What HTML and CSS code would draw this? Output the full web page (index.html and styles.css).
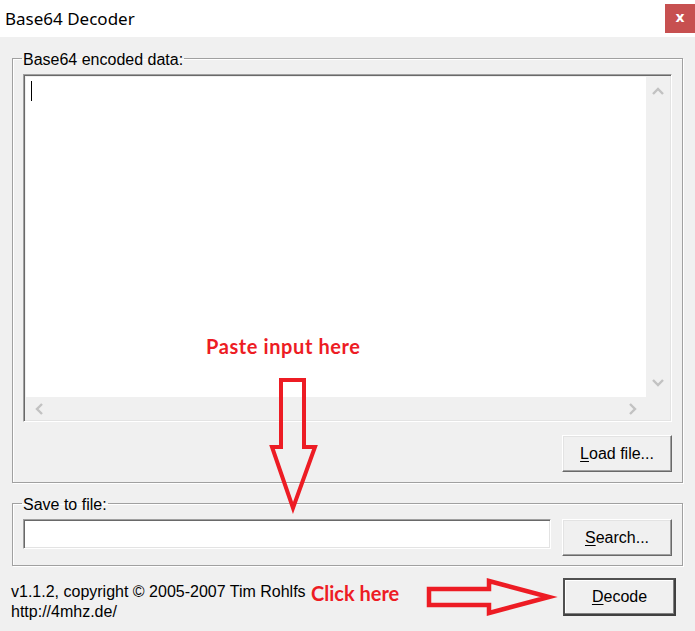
FILE: index.html
```html
<!DOCTYPE html>
<html>
<head>
<meta charset="utf-8">
<link rel="stylesheet" href="styles.css">
</head>
<body>
<div class="window">
  <div class="titlebar">
    <span class="title">Base64 Decoder</span>
    <div class="close">x</div>
  </div>
  <div class="content">
    <fieldset class="group group-data">
      <legend>Base64 encoded data:</legend>
      <div class="textbox">
        <div class="text-area"><span class="caret"></span></div>
        <div class="vscroll">
          <svg class="chev" width="14" height="10" viewBox="0 0 14 10"><path d="M2 8 L7 3 L12 8" fill="none" stroke="#c2c2c2" stroke-width="2.4"/></svg>
          <svg class="chev" width="14" height="10" viewBox="0 0 14 10"><path d="M2 2 L7 7 L12 2" fill="none" stroke="#c2c2c2" stroke-width="2.4"/></svg>
        </div>
        <div class="hscroll">
          <svg class="chev" width="10" height="14" viewBox="0 0 10 14"><path d="M8 2 L3 7 L8 12" fill="none" stroke="#c2c2c2" stroke-width="2.4"/></svg>
          <svg class="chev" width="10" height="14" viewBox="0 0 10 14"><path d="M2 2 L7 7 L2 12" fill="none" stroke="#c2c2c2" stroke-width="2.4"/></svg>
        </div>
        <div class="corner"></div>
      </div>
      <div class="row-end">
        <button class="btn"><u>L</u>oad file...</button>
      </div>
    </fieldset>
    <fieldset class="group group-save">
      <legend>Save to file:</legend>
      <div class="save-row">
        <div class="input"></div>
        <button class="btn"><u>S</u>earch...</button>
      </div>
    </fieldset>
    <div class="footer">
      <div class="info">
        <div>v1.1.2, copyright © 2005-2007 Tim Rohlfs</div>
        <div>http://4mhz.de/</div>
      </div>
      <button class="btn btn-default"><u>D</u>ecode</button>
    </div>
  </div>

  <div class="note note-paste">Paste input here</div>
  <div class="note note-click">Click here</div>
  <svg class="arrows" width="695" height="631" viewBox="0 0 695 631">
    <polygon points="281,380 304,380 304,447 315,447 293,508 272,447 281,447" fill="none" stroke="#ed1c24" stroke-width="4" stroke-linejoin="miter"/>
    <polygon points="429,589 489,589 489,581 549,597 489,613 489,605 429,605" fill="none" stroke="#ed1c24" stroke-width="4.5" stroke-linejoin="miter"/>
  </svg>
</div>
</body>
</html>
```

FILE: styles.css
```css
html, body {
  margin: 0;
  padding: 0;
}
body {
  background: #f0f0f0;
  font-family: "Liberation Sans", Arial, sans-serif;
  font-size: 16px;
  color: #000;
}
.window {
  position: relative;
  width: 695px;
  height: 631px;
  overflow: hidden;
  background: #f0f0f0;
}
.titlebar {
  height: 37px;
  background: #fff;
  display: flex;
  align-items: flex-start;
}
.title {
  font-family: "Noto Sans", sans-serif;
  font-size: 17px;
  line-height: 20px;
  padding: 9px 0 0 5px;
  color: #000;
}
.close {
  margin-left: auto;
  margin-top: 4px;
  width: 30px;
  height: 29px;
  background: #c75050;
  color: #fff;
  font-family: "DejaVu Sans", sans-serif;
  font-weight: bold;
  font-size: 14px;
  line-height: 27px;
  text-align: center;
}
.content {
  padding: 0 12px;
}
.group {
  margin: 0;
  border: 1px solid #a0a0a0;
  box-shadow: inset 1px 1px 0 #fff, 1px 1px 0 #fff;
  padding: 0 10px 10px 10px;
  min-width: 0;
}
.group legend {
  padding: 4px 1px 0 1px;
  margin-left: -1px;
  line-height: 16px;
  font-size: 16px;
}
.group-data {
  margin-top: 11px;
  padding-top: 6px;
  padding-bottom: 10px;
}
.group-save {
  margin-top: 10px;
  padding-top: 6px;
  padding-bottom: 9px;
}
.textbox {
  height: 348px;
  box-sizing: border-box;
  border-top: 1px solid #a0a0a0;
  border-left: 1px solid #a0a0a0;
  border-bottom: 1px solid #fff;
  border-right: 1px solid #fff;
  box-shadow: inset 1px 1px 0 #696969, inset -1px -1px 0 #e3e3e3;
  padding: 2px 2px 1px 2px;
  display: grid;
  grid-template-columns: 1fr 23px;
  grid-template-rows: 1fr 23px;
}
.text-area {
  background: #fff;
}
.caret {
  display: block;
  width: 1px;
  height: 20px;
  background: #000;
  margin: 4px 0 0 5px;
}
.vscroll {
  background: #f0f0f0;
  display: flex;
  flex-direction: column;
  justify-content: space-between;
  align-items: center;
  padding: 9px 0 9px 0;
}
.hscroll {
  background: #f0f0f0;
  display: flex;
  justify-content: space-between;
  align-items: center;
  padding: 0 8px 0 8px;
}
.corner {
  background: #f0f0f0;
}
.chev {
  display: block;
}
.row-end {
  display: flex;
  justify-content: flex-end;
  margin-top: 13px;
}
.btn {
  box-sizing: border-box;
  width: 110px;
  height: 37px;
  font-family: "Liberation Sans", Arial, sans-serif;
  font-size: 16px;
  color: #000;
  background: #f0f0f0;
  border: 1px solid;
  border-color: #fff #696969 #696969 #fff;
  box-shadow: inset -1px -1px 0 #a0a0a0, inset 1px 1px 0 #e3e3e3;
  padding: 0;
  margin: 0;
}
.btn u {
  text-decoration: underline;
  text-underline-offset: 2px;
}
.save-row {
  display: flex;
  align-items: flex-start;
  justify-content: space-between;
}
.input {
  width: 528px;
  height: 30px;
  box-sizing: border-box;
  background: #fff;
  border-top: 1px solid #a0a0a0;
  border-left: 1px solid #a0a0a0;
  border-bottom: 1px solid #fff;
  border-right: 1px solid #fff;
  box-shadow: inset 1px 1px 0 #696969, inset -1px -1px 0 #e3e3e3;
}
.footer {
  display: flex;
  justify-content: space-between;
  align-items: flex-start;
  padding-right: 7px;
  margin-top: 12px;
}
.info {
  margin-left: -1px;
  padding-top: 4px;
  line-height: 20px;
  font-size: 16px;
}
.btn-default {
  width: 113px;
  height: 38px;
  box-shadow: inset -1px -1px 0 #808080, inset 1px 1px 0 #fff;
  border: 2px solid;
  border-color: #505050 #404040 #404040 #505050;
}
.note {
  position: absolute;
  color: #ed1c24;
  font-family: "Lato", "Open Sans", sans-serif;
  font-weight: bold;
  font-size: 20px;
  line-height: 22px;
}
.note-paste {
  left: 206px;
  top: 335px;
  letter-spacing: 0.6px;
}
.note-click {
  left: 311px;
  top: 582px;
}
.arrows {
  position: absolute;
  left: 0;
  top: 0;
  pointer-events: none;
}
```
